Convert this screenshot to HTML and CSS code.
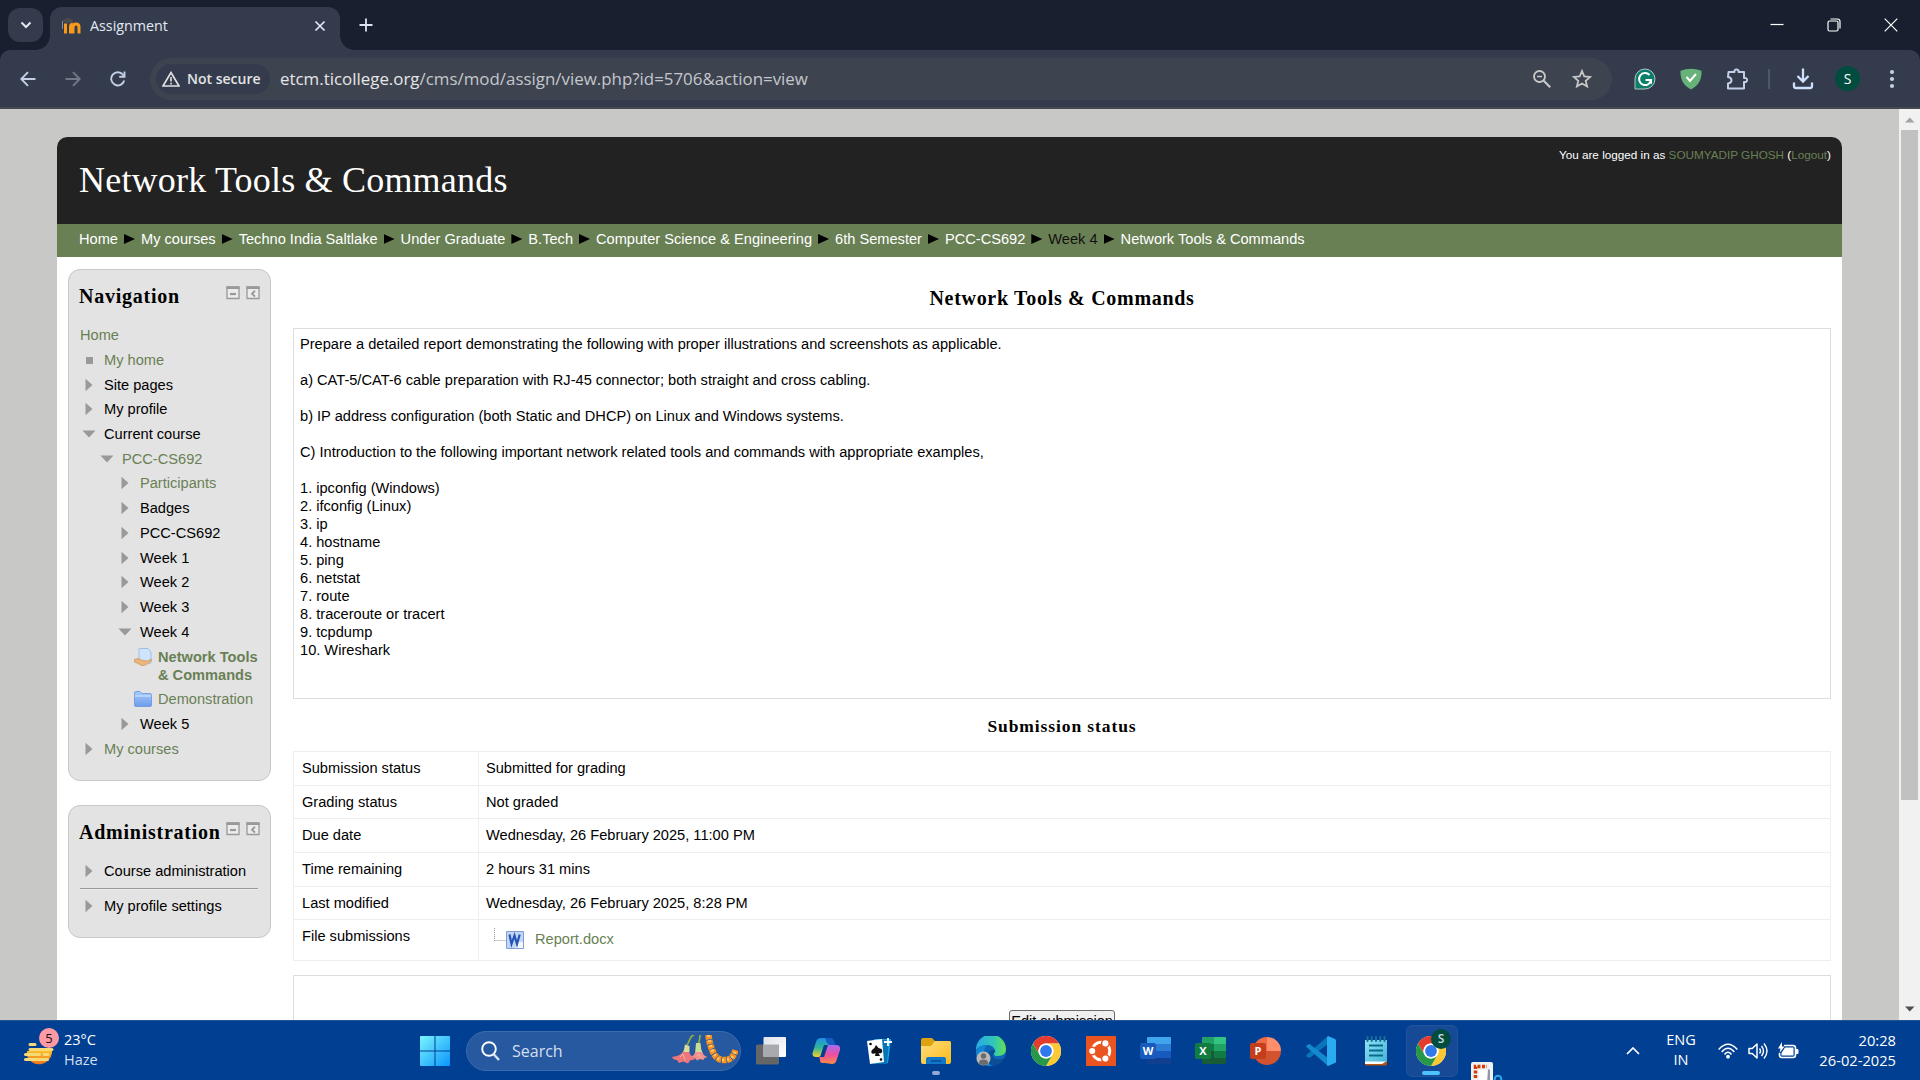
FILE: index.html
```html
<!DOCTYPE html>
<html lang="en">
<head>
<meta charset="utf-8">
<title>Assignment</title>
<link rel="stylesheet" href="styles.css">
</head>
<body>
<svg width="0" height="0" class="defs">
  <defs>
    <linearGradient id="win" x1="0" y1="0" x2="1" y2="1"><stop offset="0" stop-color="#7af5ff"/><stop offset="1" stop-color="#0a95fb"/></linearGradient>
    <linearGradient id="sun" x1="0" y1="0" x2="0" y2="1"><stop offset="0" stop-color="#fbc02a"/><stop offset="1" stop-color="#f0741c"/></linearGradient>
    <linearGradient id="tv" x1="0" y1="0" x2="1" y2="1"><stop offset="0" stop-color="#dfe3ea"/><stop offset="1" stop-color="#fff"/></linearGradient>
    <linearGradient id="cpA" x1="0" y1="0" x2="0" y2="1"><stop offset="0" stop-color="#1c8fe8"/><stop offset=".5" stop-color="#2fb59a"/><stop offset="1" stop-color="#f2d22c"/></linearGradient>
    <linearGradient id="cpB" x1="0" y1="0" x2="0" y2="1"><stop offset="0" stop-color="#a56bf2"/><stop offset=".5" stop-color="#ee4fa0"/><stop offset="1" stop-color="#fb8b45"/></linearGradient>
    <linearGradient id="fold" x1="0" y1="0" x2="1" y2="1"><stop offset="0" stop-color="#ffdf7e"/><stop offset="1" stop-color="#fbb918"/></linearGradient>
    <linearGradient id="edgeA" x1="0" y1="0" x2="1" y2="0"><stop offset="0" stop-color="#28a9e6"/><stop offset=".6" stop-color="#32c6b8"/><stop offset="1" stop-color="#66e04c"/></linearGradient>
    <linearGradient id="blueFolder" x1="0" y1="0" x2="0" y2="1"><stop offset="0" stop-color="#a9cbfb"/><stop offset="1" stop-color="#6d9cec"/></linearGradient>
    <linearGradient id="pad" x1="0" y1="0" x2="1" y2="1"><stop offset="0" stop-color="#8fe3f3"/><stop offset="1" stop-color="#43b3d6"/></linearGradient>
    <symbol id="arrow-r" viewBox="0 0 12 14"><path d="M2.500 .8v12.400L9.500 7z" fill="#999"/></symbol>
    <symbol id="arrow-d" viewBox="0 0 14 12"><path d="M.5 2.500h13L7 9.500z" fill="#999"/></symbol>
    <symbol id="hide" viewBox="0 0 14 14"><path d="M1 1h12v11.500H1z" fill="#ececec" stroke="#999" stroke-width="1.300"/><path d="M.5.5h13v2.500H.5z" fill="#999"/><path d="M4 8h6" stroke="#999" stroke-width="2.200"/></symbol>
    <symbol id="dock" viewBox="0 0 14 14"><path d="M1 1h12v11.500H1z" fill="#ececec" stroke="#999" stroke-width="1.300"/><path d="M.5.5h13v2.500H.5z" fill="#999"/><path d="M9 4.800L6 7.700l3 2.900" fill="none" stroke="#999" stroke-width="1.900"/></symbol>
    <symbol id="chrome" viewBox="0 0 30 30">
      <circle cx="15" cy="15" r="15" fill="#fff"/>
      <path d="M2 7.500A15 15 0 0 1 28 7.500H15A7.500 7.500 0 0 0 8.500 18.800z" fill="#e33b2e"/>
      <path d="M28 7.500A15 15 0 0 1 15 30L21.500 18.800A7.500 7.500 0 0 0 15 7.500z" fill="#fcc934"/>
      <path d="M15 30A15 15 0 0 1 2 7.500L8.500 18.800A7.500 7.500 0 0 0 21.500 18.800z" fill="#279847"/>
      <circle cx="15" cy="15" r="7.500" fill="#fff"/><circle cx="15" cy="15" r="5.900" fill="#3079ec"/>
    </symbol>
  </defs>
</svg>

<div class="screen">
  <header class="tabstrip">
    <button class="tab-search"><svg width="12" height="8" viewBox="0 0 12 8"><path d="M1.500 1.500L6 6l4.500-4.500" fill="none" stroke="#e3e8f2" stroke-width="2"/></svg></button>
    <div class="tab">
      <svg class="favicon" width="20" height="18" viewBox="0 0 20 18"><path d="M4.500 6.500v10M9.500 16.500V10q0-3 2.200-3M12 16.500V10q0-3 3-3t3 3v6.500" fill="none" stroke="#f79a1c" stroke-width="3"/><path d="M1 3.500l6-2.500 5 2-2 3.500-5-1z" fill="#4c4c4c"/><path d="M1.500 4v8" stroke="#8c8c8c"/></svg>
      <span class="tab-title">Assignment</span>
      <svg class="tab-close" width="12" height="12" viewBox="0 0 12 12"><path d="M1.500 1.500l9 9M10.500 1.500l-9 9" stroke="#e3e8f2" stroke-width="1.700"/></svg>
    </div>
    <svg class="new-tab" width="14" height="14" viewBox="0 0 14 14"><path d="M7 .5v13M.5 7h13" stroke="#dce3f1" stroke-width="1.800"/></svg>
    <div class="window-controls">
      <svg width="14" height="14" viewBox="0 0 14 14"><path d="M.5 6.500h13" stroke="#fff" stroke-width="1.200"/></svg>
      <svg width="14" height="14" viewBox="0 0 14 14"><rect x="1" y="3" width="10" height="10" rx="1.500" fill="none" stroke="#fff" stroke-width="1.200"/><path d="M3.500 1h7q2.500 0 2.500 2.500v7" fill="none" stroke="#fff" stroke-width="1.200"/></svg>
      <svg width="14" height="14" viewBox="0 0 14 14"><path d="M.7.7l12.600 12.600M13.300.7L.7 13.300" stroke="#fff" stroke-width="1.200"/></svg>
    </div>
  </header>

  <div class="toolbar">
    <div class="nav-buttons">
      <svg width="16" height="16" viewBox="0 0 16 16"><path d="M15.500 8H1.500M8 1.200L1.300 8 8 14.800" fill="none" stroke="#c3cfe6" stroke-width="1.900"/></svg>
      <svg width="16" height="16" viewBox="0 0 16 16"><path d="M.5 8h14M8 1.200L14.700 8 8 14.800" fill="none" stroke="#717987" stroke-width="1.900"/></svg>
      <svg width="16" height="16" viewBox="0 0 16 16"><path d="M14.200 9.500A6.600 6.600 0 1 1 13 3.700L14.500 5.500" fill="none" stroke="#c3cfe6" stroke-width="1.900"/><path d="M14.500 .5V5.800H9.200" fill="none" stroke="#c3cfe6" stroke-width="1.900"/></svg>
    </div>
    <div class="omnibox">
      <div class="chip"><svg width="18" height="16" viewBox="0 0 18 16"><path d="M9 1.500L17 15H1z" fill="none" stroke="#e3e3e3" stroke-width="1.600"/><path d="M9 6v4.500M9 11.700v1.700" stroke="#e3e3e3" stroke-width="1.600"/></svg><span>Not secure</span></div>
      <span class="url">etcm.ticollege.org<i>/cms/mod/assign/view.php?id=5706&amp;action=view</i></span>
      <div class="omni-icons">
        <svg width="18" height="18" viewBox="0 0 18 18"><circle cx="6.500" cy="6.500" r="5.500" fill="none" stroke="#c7c7c7" stroke-width="1.900"/><path d="M10.500 10.500l6.700 6.700" stroke="#c7c7c7" stroke-width="2.200"/><path d="M4 6.500h5" stroke="#c7c7c7" stroke-width="1.500"/></svg>
        <svg width="20" height="20" viewBox="0 0 20 20"><path d="M10 2l2.300 5.400 5.900.5-4.500 3.900 1.400 5.700L10 14.500l-5.100 3 1.400-5.700L1.800 7.900l5.900-.5z" fill="none" stroke="#c7c7c7" stroke-width="1.800"/></svg>
      </div>
    </div>
    <div class="extensions">
      <svg width="22" height="22" viewBox="0 0 22 22"><path d="M11 1a10 10 0 1 1 0 20H1V11A10 10 0 0 1 11 1z" fill="#0a7e69" stroke="#b5c2c9" stroke-width="1"/><path d="M15.500 7A6 6 0 1 0 17 12h-5.500M17 12v3.800" fill="none" stroke="#fff" stroke-width="2"/></svg>
      <svg width="22" height="22" viewBox="0 0 22 22"><path d="M.5 2.800Q11-1.500 21.500 2.800C22 12 18 18 11 21.500 4 18 0 12 .5 2.800z" fill="#67b279"/><path d="M6.500 8.800L10 13l6-7" fill="none" stroke="#fff" stroke-width="2"/></svg>
      <svg width="22" height="22" viewBox="0 0 22 22"><path d="M2.500 4h6q-.5-2.500 2-2.500t2 2.500H18v6q3-.5 3 2t-3 2V20.500H2v-5q3.500-.5 3.500-3.200T2 9z" fill="none" stroke="#c3cfe6" stroke-width="2" stroke-linejoin="round"/></svg>
      <span class="divider"></span>
      <svg width="22" height="22" viewBox="0 0 22 22"><path d="M11 .5V13M5.500 8l5.500 5.500L16.500 8M2 14.500V18q0 2 2 2h14q2 0 2-2v-3.500" fill="none" stroke="#cfe0ff" stroke-width="2.300"/></svg>
      <span class="avatar">S</span>
      <svg width="6" height="20" viewBox="0 0 6 20" fill="#c3cfe6"><circle cx="3" cy="3" r="2.100"/><circle cx="3" cy="10" r="2.100"/><circle cx="3" cy="17" r="2.100"/></svg>
    </div>
  </div>

  <div class="viewport">
    <div class="page">
      <div class="page-header">
        <h1>Network Tools &amp; Commands</h1>
        <div class="login">You are logged in as <a>SOUMYADIP GHOSH</a> (<a>Logout</a>)</div>
      </div>
      <nav class="breadcrumb">
        <span>Home</span><b></b><span>My courses</span><b></b><span>Techno India Saltlake</span><b></b><span>Under Graduate</span><b></b><span>B.Tech</span><b></b><span>Computer Science &amp; Engineering</span><b></b><span>6th Semester</span><b></b><span>PCC-CS692</span><b></b><span class="dim">Week 4</span><b></b><span>Network Tools &amp; Commands</span>
      </nav>
      <div class="columns">
        <aside class="side">
          <section class="block nav-block">
            <div class="block-head"><h2>Navigation</h2><svg width="14" height="14"><use href="#hide"/></svg><svg width="14" height="14"><use href="#dock"/></svg></div>
            <ul class="tree">
              <li class="l0 link">Home</li>
              <li class="l1 link"><span class="mark"><em class="square"></em></span>My home</li>
              <li class="l1"><span class="mark"><svg width="12" height="14"><use href="#arrow-r"/></svg></span>Site pages</li>
              <li class="l1"><span class="mark"><svg width="12" height="14"><use href="#arrow-r"/></svg></span>My profile</li>
              <li class="l1"><span class="mark"><svg width="14" height="12"><use href="#arrow-d"/></svg></span>Current course</li>
              <li class="l2 link"><span class="mark"><svg width="14" height="12"><use href="#arrow-d"/></svg></span>PCC-CS692</li>
              <li class="l3 link"><span class="mark"><svg width="12" height="14"><use href="#arrow-r"/></svg></span>Participants</li>
              <li class="l3"><span class="mark"><svg width="12" height="14"><use href="#arrow-r"/></svg></span>Badges</li>
              <li class="l3"><span class="mark"><svg width="12" height="14"><use href="#arrow-r"/></svg></span>PCC-CS692</li>
              <li class="l3"><span class="mark"><svg width="12" height="14"><use href="#arrow-r"/></svg></span>Week 1</li>
              <li class="l3"><span class="mark"><svg width="12" height="14"><use href="#arrow-r"/></svg></span>Week 2</li>
              <li class="l3"><span class="mark"><svg width="12" height="14"><use href="#arrow-r"/></svg></span>Week 3</li>
              <li class="l3"><span class="mark"><svg width="14" height="12"><use href="#arrow-d"/></svg></span>Week 4</li>
              <li class="l4 link current"><span class="mark"><svg width="18" height="18" viewBox="0 0 18 18"><path d="M5 .5h9l3 3.500V15H5z" fill="#cfe4fb" stroke="#9cc0ea"/><path d="M.5 11.500Q4 9.500 7.500 12l6 1q3-2.500 4.500-1-3 4-8 5.500-3 .5-5-1.500L.5 14z" fill="#eab67c" stroke="#c98b4d" stroke-width=".6"/></svg></span><span>Network Tools<br>&amp; Commands</span></li>
              <li class="l4 link"><span class="mark"><svg width="18" height="16" viewBox="0 0 18 16"><path d="M.5 14V2q0-1.500 1.500-1.500h4L8 2.500h8q1.500 0 1.500 1.500v10q0 1.500-1.500 1.500H2Q.5 15.500.5 14z" fill="url(#blueFolder)" stroke="#6694e3" stroke-width=".8"/><path d="M1 5h16" stroke="#d8e8ff"/></svg></span>Demonstration</li>
              <li class="l3"><span class="mark"><svg width="12" height="14"><use href="#arrow-r"/></svg></span>Week 5</li>
              <li class="l1 link"><span class="mark"><svg width="12" height="14"><use href="#arrow-r"/></svg></span>My courses</li>
            </ul>
          </section>
          <section class="block admin-block">
            <div class="block-head"><h2>Administration</h2><svg width="14" height="14"><use href="#hide"/></svg><svg width="14" height="14"><use href="#dock"/></svg></div>
            <ul class="tree">
              <li class="l1"><span class="mark"><svg width="12" height="14"><use href="#arrow-r"/></svg></span>Course administration</li>
              <li class="rule"></li>
              <li class="l1"><span class="mark"><svg width="12" height="14"><use href="#arrow-r"/></svg></span>My profile settings</li>
            </ul>
          </section>
        </aside>
        <main class="content">
          <h2>Network Tools &amp; Commands</h2>
          <div class="intro">Prepare a detailed report demonstrating the following with proper illustrations and screenshots as applicable.<br><br>a) CAT-5/CAT-6 cable preparation with RJ-45 connector; both straight and cross cabling.<br><br>b) IP address configuration (both Static and DHCP) on Linux and Windows systems.<br><br>C) Introduction to the following important network related tools and commands with appropriate examples,<br><br>1. ipconfig (Windows)<br>2. ifconfig (Linux)<br>3. ip<br>4. hostname<br>5. ping<br>6. netstat<br>7. route<br>8. traceroute or tracert<br>9. tcpdump<br>10. Wireshark</div>
          <h3>Submission status</h3>
          <div class="status">
            <div class="row"><span>Submission status</span><span>Submitted for grading</span></div>
            <div class="row short"><span>Grading status</span><span>Not graded</span></div>
            <div class="row"><span>Due date</span><span>Wednesday, 26 February 2025, 11:00 PM</span></div>
            <div class="row"><span>Time remaining</span><span>2 hours 31 mins</span></div>
            <div class="row short"><span>Last modified</span><span>Wednesday, 26 February 2025, 8:28 PM</span></div>
            <div class="row file-row"><span>File submissions</span><span class="file"><svg width="30" height="21" viewBox="0 0 30 21"><path d="M.5 0v13M.5 12.500H12" stroke="#999" stroke-dasharray="1 1" fill="none"/><path d="M12.500 3.500h17v17h-17z" fill="#c3d6f3" stroke="#7c9fd6"/><path d="M24 14h5v6h-8z" fill="#f3f7fd"/><path d="M15.500 6.500l2 9.500 3-8.500 2.500 8.500 2.700-9.500" fill="none" stroke="#2456b8" stroke-width="2.200"/></svg><a>Report.docx</a></span></div>
          </div>
          <div class="actions"><button>Edit submission</button></div>
        </main>
      </div>
    </div>
    <div class="scrollbar">
      <svg width="10" height="6" viewBox="0 0 10 6"><path d="M0 5.500h9.500L4.750.5z" fill="#a3a3a3"/></svg>
      <div class="thumb"></div>
      <svg width="10" height="6" viewBox="0 0 10 6"><path d="M0 .5h9.500L4.750 5.500z" fill="#505050"/></svg>
    </div>
  </div>

  <footer class="taskbar">
    <div class="weather">
      <svg width="30" height="40" viewBox="0 0 30 40"><path d="M3 20h25v2a13 13 0 0 1-25 3z" fill="url(#sun)"/><path d="M6 13.500h5M6 18.500h22M1.500 23.500h14M20 23.500h4M1.500 28.500h22" stroke="#f6da78" stroke-width="3" stroke-linecap="round"/></svg>
      <span class="badge">5</span>
      <div class="weather-text"><p>23°C</p><p class="haze">Haze</p></div>
    </div>
    <svg class="start" width="30" height="30" viewBox="0 0 30 30"><path d="M1 0h13.500v14.500H0V1q0-1 1-1zM15.500 0H29q1 0 1 1v13.500H15.500zM0 15.500h14.500V30H1q-1 0-1-1zM15.500 15.500H30V29q0 1-1 1H15.500z" fill="url(#win)"/></svg>
    <div class="search">
      <svg width="19" height="20" viewBox="0 0 19 20"><circle cx="8" cy="8" r="6.800" fill="none" stroke="#fff" stroke-width="1.900"/><path d="M12.500 13l5.500 6" stroke="#dbe4f3" stroke-width="2.400"/></svg>
      <span>Search</span>
      <svg class="flowers" width="66" height="32" viewBox="0 0 66 32"><path d="M22 0q-3 1-4 4t-3 6M28 0q0 4-1.500 9" fill="none" stroke="#8fae3f" stroke-width="1.700"/><path d="M13 9.500l4.500 1.500q.5 5-1 9.500h-7q3-5 3.500-11z" fill="#d9dd97"/><path d="M24 8h4.500q0 6 2.500 11h-8z" fill="#cddb93"/><path d="M10.500 17q-2 4-10.500 5 1 3 5 3l2 3 4-1.500 5 2 2-3 6-1.500q-5-2-7-7z" fill="#ec777b"/><path d="M23.500 17q-1 3-4.500 5l4 1 2 2.500 3-1.500 3.500 1 1-2 3-1q-4-1-5.500-5z" fill="#f18f8a"/><path d="M8 22l3-3 2 6M25 21l2-2 2 4" fill="none" stroke="#f6b0a6"/><path d="M36.500 0q1 9 3.500 14.500 3 9 9.500 10.300 7 1.200 11-3.300 2-2.500 3-6.500" fill="none" stroke="#f98f1f" stroke-width="6.500" stroke-dasharray="4.200 .8"/><path d="M36.500 0q1 9 3.500 14.500 3 9 9.500 10.300 7 1.200 11-3.300 2-2.500 3-6.500" fill="none" stroke="#ffc864" stroke-width="3" stroke-dasharray="2 3"/></svg>
    </div>
    <div class="apps">
      <div><svg width="30" height="30" viewBox="0 0 30 30"><rect y="8.500" width="23" height="20" rx="1.500" fill="#646668"/><rect x="7.500" y="1" width="22.500" height="20" rx="1" fill="url(#tv)"/><path d="M7.500 8.500H23V21H7.500z" fill="#a8abae"/></svg></div>
      <div><svg width="30" height="30" viewBox="0 0 30 30"><path d="M17 3h3q2 0 3 3l1 4h-5q-2 0-3 3l-3 8H5q-4 0-3.500-4L5 6q1-4 5-4h7z" fill="url(#cpA)"/><path d="M14 27h-3q-2 0-2-3l-1-4h3q2 0 3-3l3-8h8q5 0 4 5l-3 9q-1 5-5 5z" fill="url(#cpB)"/><path d="M17 9l-4 12H9l4-12z" fill="#003f91"/><path d="M14 2h6q2 0 3 3l1.500 4H18q-3-3-4-7z" fill="#155bc0"/></svg></div>
      <div><svg width="30" height="30" viewBox="0 0 30 30"><path d="M8 3h17l-3 24H9z" fill="#19a5e1"/><path d="M6 4h17l-2 24H8z" fill="#0874b8"/><path d="M1 5l15-2 2 23-14 2z" fill="#fff"/><path d="M10 9q-1 3-4 5c-2 3 1 5 3.500 3L9 20h5l-1.500-3c3 1 5-1 3-4q-4-1-5.500-4z" fill="#111"/><circle cx="4.500" cy="8" r="1.300"/><circle cx="15" cy="23.500" r="1.300"/><path d="M22 2v8M18 6h8" stroke="#fff" stroke-width="1.800"/></svg></div>
      <div class="running"><svg width="30" height="30" viewBox="0 0 30 30"><path d="M0 4q0-2 2-2h9l3 3h14q2 0 2 2v6H0z" fill="#e0a20f"/><path d="M0 10h10l4-5h14q2 0 2 2v19q0 2-2 2H2q-2 0-2-2z" fill="url(#fold)"/><path d="M5 28v-5q0-2 2-2h16q2 0 2 2v5z" fill="#1177cb"/><path d="M10 25h10" stroke="#0b4d8c" stroke-width="1.500"/></svg></div>
      <div><svg width="30" height="30" viewBox="0 0 30 30"><circle cx="15" cy="15" r="15" fill="#0c67b8"/><path d="M0 14A15 15 0 0 1 30 13q0 7-8 7-5 0-4-3 2-1 1-3-2-5-8-5Q4 9 0 14z" fill="url(#edgeA)"/><path d="M0 15Q4 9 11 9q-4 4-3 9 2 9 10 12A15 15 0 0 1 0 15z" fill="#1286d6"/><path d="M18 17q-3 4 2 6 5 1 8-1-3 8-12 8-6-4-5-11 2-5 7-5 2 1 0 3z" fill="#0b4e96"/><circle cx="7.500" cy="22.500" r="7" fill="#b9b9b9"/><circle cx="7.500" cy="20" r="2.700" fill="#6c6c6c"/><path d="M2.800 27.500q0-4 4.700-4t4.700 4q-4.700 3.500-9.400 0z" fill="#6c6c6c"/></svg></div>
      <div><svg width="30" height="30"><use href="#chrome"/></svg></div>
      <div><svg width="30" height="30" viewBox="0 0 30 30"><path d="M0 0h30v30H0z" fill="#e95420"/><circle cx="15" cy="15" r="8.800" fill="none" stroke="#fff" stroke-width="3"/><g fill="#fff" stroke="#e95420" stroke-width="1.500"><circle cx="6.200" cy="15" r="3.800"/><circle cx="19.400" cy="7.400" r="3.800"/><circle cx="19.400" cy="22.600" r="3.800"/></g></svg></div>
      <div class="office word"><svg width="30" height="30" viewBox="0 0 30 30"><path d="M7 1h22q1 0 1 1v6H6V2q0-1 1-1z" fill="#41a5ee"/><path d="M6 8h24v7H6z" fill="#2b7cd3"/><path d="M6 15h24v7H6z" fill="#185abd"/><path d="M6 22h24v5q0 1-1 1H7q-1 0-1-1z" fill="#103f91"/></svg><b>W</b></div>
      <div class="office excel"><svg width="30" height="30" viewBox="0 0 30 30"><path d="M7 1h11v7H6V2q0-1 1-1z" fill="#21a366"/><path d="M18 1h11q1 0 1 1v6H18z" fill="#33c481"/><path d="M6 8h12v7H6z" fill="#107c41"/><path d="M18 8h12v7H18z" fill="#21a366"/><path d="M6 15h12v13H7q-1 0-1-1z" fill="#185c37"/><path d="M18 15h12v7H18z" fill="#107c41"/><path d="M18 22h12v5q0 1-1 1H18z" fill="#185c37"/></svg><b>X</b></div>
      <div class="office ppt"><svg width="30" height="30" viewBox="0 0 30 30"><path d="M16 1v14H2A14 14 0 0 1 16 1z" fill="#ed6c47"/><path d="M16 1a14 14 0 0 1 14 14H16z" fill="#ff8f6b"/><path d="M2 15h28a14 14 0 0 1-28 0z" fill="#d35230"/></svg><b>P</b></div>
      <div><svg width="30" height="30" viewBox="0 0 30 30"><path d="M22 0L1 18.500q-1.500 1.500 0 2.500l2.500 1L22 8z" fill="#0877b9"/><path d="M22 30L1 11.500Q-.5 10 1 9l2.500-1L22 22z" fill="#1489d0"/><path d="M22 0l7 3q1 .5 1 1.500v21q0 1-1 1.500l-7 3q-1 0-1-2V2z" fill="#2aacf2"/></svg></div>
      <div><svg width="24" height="30" viewBox="0 0 24 30"><path d="M1 4h22v22H1z" fill="url(#pad)"/><path d="M1 26h22v2q0 1.500-1.500 1.500h-19Q1 29.500 1 28z" fill="#b5530f"/><path d="M1 25.500h21l-4 2.500H1z" fill="#fff"/><path d="M3.500 1v4M7.700 1v4M12 1v4M16.300 1v4M20.500 1v4" stroke="#1a6f94" stroke-width="2" stroke-linecap="round"/><path d="M5 9.500h14M5 14.500h14M5 19.500h14" stroke="#086a8e" stroke-width="1.800"/></svg></div>
      <div class="active"><svg width="30" height="30"><use href="#chrome"/></svg><span class="profile">S</span></div>
      <div class="snip"><svg width="32" height="30" viewBox="0 0 32 30"><rect x="0" y="0" width="22" height="26" rx="2" fill="#eff1f4"/><path d="M4.500 16V4.500H16" stroke="#d83b01" stroke-width="3.500" stroke-dasharray="3 1.500" fill="none"/><path d="M8 8h9v14H8z" fill="#fff"/><path d="M17 7l2 1v14h-3z" fill="#8f9aa3"/><circle cx="27" cy="17" r="3.300" fill="none" stroke="#2da9e8" stroke-width="2"/></svg></div>
    </div>
    <div class="tray">
      <svg class="chev" width="14" height="8" viewBox="0 0 14 8"><path d="M1 7l6-6 6 6" fill="none" stroke="#fff" stroke-width="1.700"/></svg>
      <div class="lang"><p>ENG</p><p>IN</p></div>
      <svg width="20" height="16" viewBox="0 0 20 16"><g fill="none" stroke="#fff" stroke-width="1.500"><path d="M.7 6.500Q10-4 19.300 6.500M3.700 9Q10 1.500 16.300 9M6.500 11.500Q10 7.200 13.500 11.500"/></g><circle cx="10" cy="13.700" r="1.900" fill="#fff"/></svg>
      <svg width="20" height="18" viewBox="0 0 20 18"><path d="M1 6.500h3.200L9 2v14l-4.800-4.500H1z" fill="none" stroke="#fff" stroke-width="1.500" stroke-linejoin="round"/><path d="M11.500 6.500q2 2.500 0 5M13.500 4q4 5 0 10M16 1.500q6 7.500 0 15" fill="none" stroke="#fff" stroke-width="1.400"/></svg>
      <svg width="21" height="17" viewBox="0 0 21 17"><path d="M6 3.500h9q2.500 0 2.500 2.500v7q0 2.500-2.500 2.500H4Q1.500 15.500 1.500 13v-2" fill="none" stroke="#fff" stroke-width="1.600"/><path d="M7 5.500h8.500v8h-12V11z" fill="#fff"/><path d="M18 7.500h2v4h-2z" fill="#fff" stroke="#fff"/><path d="M4 0L0 6.500h2.500L1.500 11 6.500 4.500H4z" fill="#fff"/></svg>
      <div class="clock"><p>20:28</p><p>26-02-2025</p></div>
    </div>
  </footer>
</div>
</body>
</html>
```
FILE: styles.css
```css
* { box-sizing: border-box; }
body { margin: 0; font-family: "Liberation Sans", Arial, sans-serif; font-size: 14.620px; color: #000; overflow: hidden; }
svg { display: block; flex: none; }
p, h1, h2, h3, ul { margin: 0; padding: 0; }
.defs { position: absolute; }
.screen { display: grid; grid-template-rows: 50px 59px 911px 60px; width: 1920px; height: 1080px; overflow: hidden; }
.tabstrip, .toolbar, .taskbar { font-family: "Open Sans", "Noto Sans", sans-serif; }

.tabstrip { display: flex; align-items: center; background: #18202f; padding: 0 22px 0 8px; }
.tab-search { width: 35px; height: 34px; border: 0; border-radius: 12px; background: #333b4d; display: flex; align-items: center; justify-content: center; padding: 0; }
.tab { display: flex; align-items: center; align-self: flex-end; width: 290px; height: 43px; margin-left: 7px; padding: 0 14px 6px 11px; background: #333b4d; border-radius: 12px 12px 0 0; position: relative; }
.tab::before, .tab::after { content: ""; position: absolute; bottom: 0; width: 14px; height: 14px; }
.tab::before { left: -14px; background: radial-gradient(circle at 0 0, transparent 13.500px, #333b4d 14px); }
.tab::after { right: -14px; background: radial-gradient(circle at 100% 0, transparent 13.500px, #333b4d 14px); }
.tab-title { margin-left: 9px; font-size: 14.300px; color: #e3e8f2; flex: 1; }
.new-tab { margin-left: 19px; }
.window-controls { margin-left: auto; display: flex; gap: 43px; }

.toolbar { display: flex; align-items: center; background: #333b4d; border-bottom: 2px solid #454a52; padding: 0 25px 0 20px; border-radius: 10px 10px 0 0; }
.screen { background: #18202f; }
.nav-buttons { display: flex; gap: 29px; width: 130px; }
.omnibox { display: flex; align-items: center; width: 1462px; height: 42px; border-radius: 21px; background: #3d434f; padding: 0 20px 0 6px; }
.chip { display: flex; align-items: center; width: 114px; height: 30px; border-radius: 15px; background: #333b4d; padding-left: 6px; gap: 7px; font-size: 14px; font-weight: 600; color: #e3e3e3; white-space: nowrap; }
.url { margin-left: 10px; font-size: 16.900px; color: #e6e6e6; white-space: nowrap; }
.url i { font-style: normal; color: #c4c7cc; }
.omni-icons { margin-left: auto; display: flex; align-items: center; gap: 21px; }
.extensions { margin-left: auto; display: flex; align-items: center; }
.extensions svg + svg { margin-left: 24px; }
.divider { width: 2px; height: 20px; background: #4d586e; margin: 0 22px 0 20px; }
.avatar { width: 25px; height: 25px; border-radius: 50%; background: #004d40; color: #fff; font-size: 14px; display: flex; align-items: center; justify-content: center; margin: 0 29px 0 21px; }

.viewport { display: flex; background: #c8c8c6; overflow: hidden; }
.page { width: 1785px; height: 990px; margin: 28px 57px 0 57px; background: #fff; border-radius: 10px 10px 0 0; overflow: hidden; flex: none; }
.page-header { height: 87px; background: #222; display: flex; justify-content: space-between; padding: 0 11px 0 22px; }
.page-header h1 { font: 400 36px/87px "Liberation Serif", serif; color: #fff; letter-spacing: .2px; white-space: nowrap; }
.login { color: #fff; font-size: 11.720px; line-height: 14px; padding-top: 11px; }
.login a { color: #698055; }
.breadcrumb { height: 33px; background: #698055; color: #fff; display: flex; align-items: flex-start; padding: 6px 0 0 22px; line-height: 18px; white-space: nowrap; }
.breadcrumb b { width: 11px; height: 10px; margin: 4px 6px 0 6px; background: #000; clip-path: polygon(0 0, 100% 50%, 0 100%); }
.breadcrumb .dim { color: #111; }
.columns { display: flex; padding: 12px 11px 0 11px; gap: 22px; }
.side { width: 203px; flex: none; display: flex; flex-direction: column; gap: 24px; }
.block { background: #e3e3e3; border: 1px solid #c8c8c6; border-radius: 12px; padding: 0 10px 0 11px; }
.nav-block { height: 512px; }
.admin-block { height: 133px; }
.block-head { display: flex; align-items: flex-start; height: 53px; padding-top: 16px; }
.block-head h2 { font: 700 20px/20px "Liberation Serif", serif; flex: 1; letter-spacing: .75px; margin-left: -1px; white-space: nowrap; }
.block-head svg + svg { margin-left: 6px; }
.tree { list-style: none; line-height: 18px; }
.tree li { display: flex; padding: 3.350px 0; white-space: nowrap; }
.link, .file a { color: #698055; }
.mark { width: 24px; display: flex; justify-content: center; align-items: center; height: 18px; flex: none; }
.l1 .mark, .l2 .mark, .l3 .mark { padding-right: 6px; }
.mark .square { width: 7px; height: 7px; background: #999; }
.tree .l2 { padding-left: 18px; }
.tree .l3 { padding-left: 36px; }
.tree .l4 { padding-left: 54px; }
.l4 .mark { justify-content: flex-start; }
.tree .current { font-weight: 700; padding-top: 4px; padding-bottom: 3px; }
.tree .rule { height: 2px; margin: 4px 2px 4px 0; padding: 0; background: #999; border-bottom: 1px solid #eee; }
.content { width: 1538px; }
.content h2 { font: 700 20px/22px "Liberation Serif", serif; letter-spacing: .7px; text-align: center; padding-top: 18px; height: 59px; }
.intro { height: 371px; border: 1px solid #ddd; padding: 6px 6px; line-height: 18px; }
.content h3 { font: 700 17.500px/20px "Liberation Serif", serif; letter-spacing: .9px; text-align: center; padding-top: 17px; height: 52px; }
.status { border: 1px solid #eee; border-bottom: 0; }
.row { display: grid; grid-template-columns: 184px 1fr; height: 34px; border-bottom: 1px solid #eee; line-height: 18px; }
.row.short { height: 33px; }
.row.file-row { height: 41px; }
.row > span { padding: 7px 0 0 8px; }
.row > span + span { border-left: 1px solid #eee; padding-left: 7px; }
.row .file { display: flex; align-items: flex-start; gap: 11px; padding-top: 8px; }
.row .file svg { margin-left: 8px; }
.row .file a { padding-top: 2px; }
.actions { margin-top: 14px; height: 80px; border: 1px solid #ddd; display: flex; justify-content: center; padding-top: 34px; }
.actions button { width: 106px; height: 22px; border: 1.500px solid #6b6b6b; border-radius: 3px; background: #efefef; font: 14.500px/18px "Liberation Sans", sans-serif; padding: 0; }
.scrollbar { width: 21px; background: #f1f1f1; display: flex; flex-direction: column; align-items: center; padding: 8px 0 8px; }
.thumb { width: 17px; height: 670px; background: #c1c1c1; margin: 7px 0 auto; flex: none; }

.taskbar { background: #003f91; border-top: 1px solid #1f5590; display: flex; color: #fff; align-items: center; position: relative; font-size: 14.500px; line-height: 20px; }
.weather { display: flex; align-items: center; width: 420px; padding-left: 24px; gap: 10px; position: relative; flex: none; height: 59px; }
.weather-text { padding-bottom: 2px; }
.badge { position: absolute; left: 39px; top: 7px; width: 20px; height: 20px; border-radius: 50%; background: #ff99a4; color: #111; font-size: 13px; line-height: 20px; text-align: center; }
.haze { color: #d3deee; }
.search { display: flex; align-items: center; width: 275px; height: 40px; margin-left: 16px; padding: 0 2px 0 14px; border-radius: 20px; background: #2759a0; border: 1px solid #3d6aaa; font-size: 16px; color: #d3deee; flex: none; }
.search span { margin-left: 12px; flex: 1; }
.apps { display: flex; margin-left: 2px; height: 59px; }
.apps div { width: 55px; display: flex; justify-content: center; align-items: center; position: relative; flex: none; }
.running::after { content: ""; position: absolute; bottom: 5px; left: 23.500px; width: 8px; height: 4px; border-radius: 2px; background: #92a9d5; }
.office b { position: absolute; left: 12px; top: 22px; width: 16px; height: 16px; border-radius: 2px; font-size: 11px; line-height: 16px; text-align: center; }
.word b { background: #185abd; }
.excel b { background: #107c41; }
.ppt b { background: #c43e1c; }
.apps .active { z-index: 0; }
.apps .active::before { content: ""; position: absolute; left: 2.500px; top: 4px; width: 50px; height: 50px; border-radius: 6px; background: #164a96; border: 1px solid #22549c; z-index: -1; }
.apps .active::after { content: ""; position: absolute; left: 18.500px; bottom: 5px; width: 18px; height: 4px; border-radius: 2px; background: #4cc2ff; }
.profile { position: absolute; left: 28px; top: 8px; width: 20px; height: 20px; border-radius: 50%; background: #004d40; color: #cfd8dc; font-size: 12px; line-height: 20px; text-align: center; font-weight: 600; }
.apps .snip { align-items: flex-start; padding: 41px 0 0 2px; overflow: hidden; }
.tray { margin-left: auto; display: flex; align-items: center; padding-right: 24px; }
.lang { text-align: center; width: 30px; margin: 0 22px 0 26px; padding-bottom: 1px; }
.tray > svg + svg { margin-left: 10px; }
.clock { text-align: right; width: 81px; margin-left: 16px; padding-bottom: 2px; font-size: 14.700px; }
```
